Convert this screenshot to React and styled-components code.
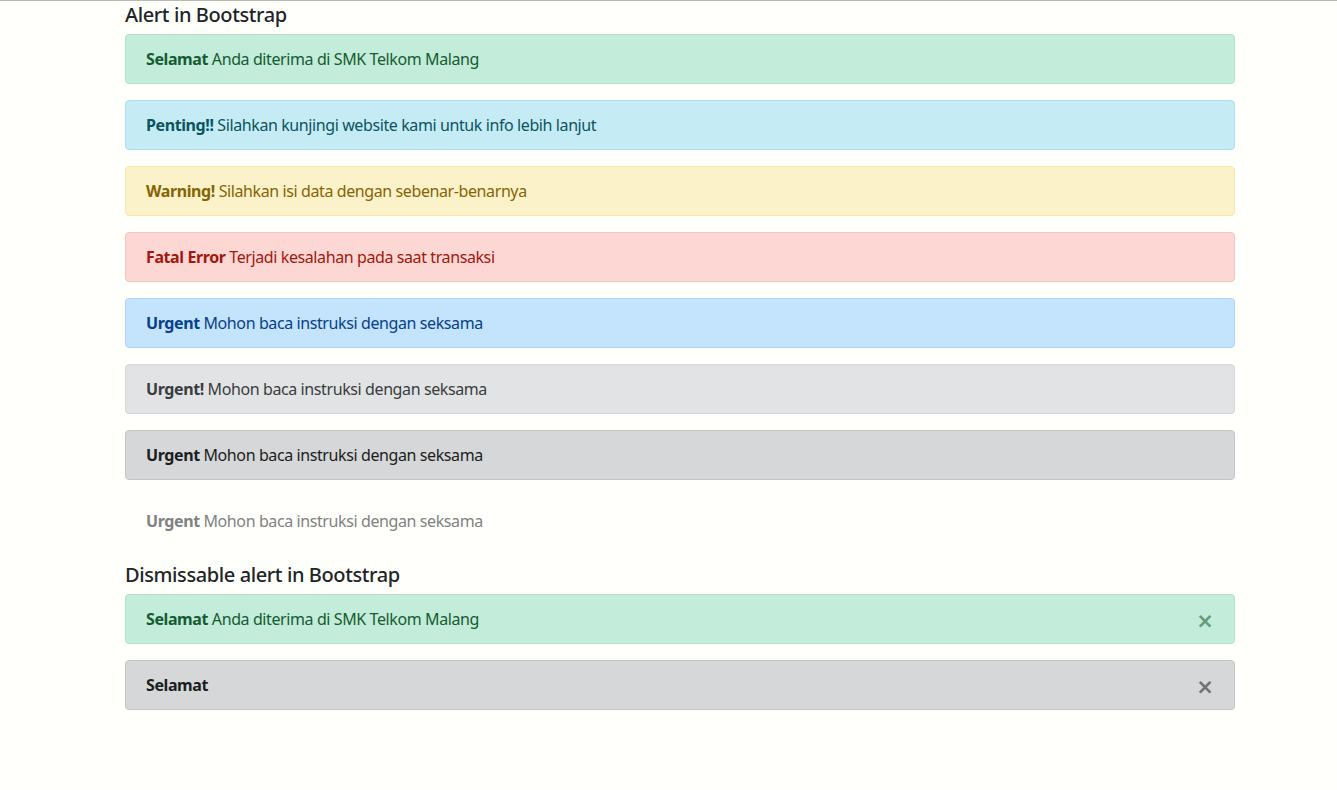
import React from 'react';
import styled, { createGlobalStyle } from 'styled-components';

const GlobalStyle = createGlobalStyle`
  html, body {
    margin: 0;
    padding: 0;
    background: #fffffb;
  }
  body {
    font-family: "Noto Sans", "Open Sans", sans-serif;
    font-size: 16px;
    line-height: 1.5;
    letter-spacing: -0.4px;
    color: #212529;
    border-top: 1px solid #b9b9b6;
  }
`;

const variants = {
  success: { bg: '#c3ecda', border: '#b1e2cb', color: '#145c30' },
  info: { bg: '#c5ecf4', border: '#afe0ed', color: '#0c5460' },
  warning: { bg: '#fcf2ca', border: '#f8e7ad', color: '#856404' },
  danger: { bg: '#fdd7d3', border: '#f8c4c0', color: '#a1180f' },
  primary: { bg: '#c4e3fc', border: '#aed5f6', color: '#06418a' },
  secondary: { bg: '#e2e3e4', border: '#d4d6d8', color: '#383d41' },
  dark: { bg: '#d6d7d8', border: '#c3c4c6', color: '#1b1e21' },
  light: { bg: '#fffffb', border: '#fffffb', color: '#818182' },
};

const Container = styled.div`
  width: 1110px;
  margin-left: 125px;
  padding-top: 1px;
`;

const Heading = styled.h5`
  margin: 0 0 6px;
  font-size: 20px;
  font-weight: 500;
  line-height: 26px;
  color: #212529;
`;

const Alert = styled.div`
  position: relative;
  padding: 12px ${(p) => (p.$dismissible ? '64px' : '20px')} 12px 20px;
  margin-bottom: 16px;
  border: 1px solid ${(p) => variants[p.$variant].border};
  border-radius: 4px;
  background: ${(p) => variants[p.$variant].bg};
  color: ${(p) => variants[p.$variant].color};
  line-height: 24px;

  strong {
    font-weight: 700;
  }
`;

const Close = styled.button`
  position: absolute;
  top: 0;
  right: 18px;
  bottom: 0;
  width: 22px;
  padding: 5px 0 0;
  display: flex;
  align-items: center;
  justify-content: center;
  border: 0;
  background: transparent;
  color: inherit;
  opacity: 0.55;
  font-family: "DejaVu Sans", sans-serif;
  font-size: 21px;
  font-weight: 700;
  line-height: 1;
  cursor: pointer;
`;

const basic = [
  ['success', 'Selamat', 'Anda diterima di SMK Telkom Malang'],
  ['info', 'Penting!!', 'Silahkan kunjingi website kami untuk info lebih lanjut'],
  ['warning', 'Warning!', 'Silahkan isi data dengan sebenar-benarnya'],
  ['danger', 'Fatal Error', 'Terjadi kesalahan pada saat transaksi'],
  ['primary', 'Urgent', 'Mohon baca instruksi dengan seksama'],
  ['secondary', 'Urgent!', 'Mohon baca instruksi dengan seksama'],
  ['dark', 'Urgent', 'Mohon baca instruksi dengan seksama'],
  ['light', 'Urgent', 'Mohon baca instruksi dengan seksama'],
];

const dismissible = [
  ['success', 'Selamat', 'Anda diterima di SMK Telkom Malang'],
  ['dark', 'Selamat', ''],
];

export default function App() {
  return (
    <>
      <GlobalStyle />
      <Container>
        <Heading>Alert in Bootstrap</Heading>
        {basic.map(([v, title, text], i) => (
          <Alert key={i} $variant={v}>
            <strong>{title}</strong> {text}
          </Alert>
        ))}
        <Heading>Dismissable alert in Bootstrap</Heading>
        {dismissible.map(([v, title, text], i) => (
          <Alert key={i} $variant={v} $dismissible>
            <strong>{title}</strong> {text}
            <Close aria-label="Close">×</Close>
          </Alert>
        ))}
      </Container>
    </>
  );
}
